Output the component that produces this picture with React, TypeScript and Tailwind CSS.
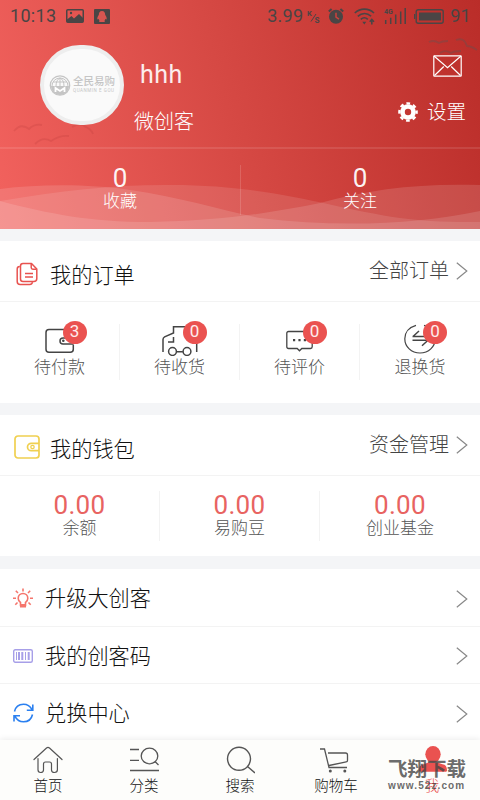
import React from "react";

type IconProps = { className?: string };

const ImageIcon = () => (
    <svg className="w-[18px] h-[14px]" viewBox="0 0 18 14">
        <rect x="0.75" y="0.75" width="16.5" height="12.5" rx="1" fill="none" stroke="#4a4545" strokeWidth="1.5" />
        <circle cx="5" cy="4" r="1.2" fill="#4a4545" />
        <path d="M1 12V10.500L5.500 7l2.500 2.500L13 5l4 4v4H1z" fill="#4a4545" />
    </svg>
);

const PenguinIcon = () => (
    <svg className="w-4 h-[15px]" viewBox="0 0 16 15">
        <rect width="16" height="15" rx="1" fill="#4a4545" />
        <path d="M8 2C5.600 2 4.800 3.800 4.800 6 3.700 7.500 3 9 3.400 10.300c.3.4.8-.1 1.100-.5.2.8.6 1.300 1.100 1.700-.7.300-.9 1.500.4 1.500h4c1.300 0 1.100-1.200.4-1.500.5-.4.900-.9 1.100-1.700.3.4.800.9 1.100.5C13 9 12.300 7.500 11.200 6 11.200 3.800 10.400 2 8 2z" fill="#d95550" />
    </svg>
);

const AlarmIcon = () => (
    <svg className="w-4 h-4" viewBox="0 0 16 16" fill="none">
        <circle cx="8" cy="8.700" r="7" fill="#4a4545" />
        <path d="M.8 3.400 3.600.9M15.200 3.400 12.400.9" stroke="#4a4545" strokeWidth="2" />
        <path d="M8 4.800v4.400l3 2" stroke="#cc413c" strokeWidth="1.500" />
    </svg>
);

const WifiIcon = () => (
    <svg className="w-[21px] h-[17px]" viewBox="0 0 21 17" fill="none" stroke="#4a4545" strokeWidth="1.600">
        <path d="M.8 5c5.500-5.200 13.800-5.200 19.200 0M3.800 8.300c4-3.800 9.500-3.800 13.300 0M6.800 11.400c2.300-2.200 4.700-2.200 7 0" />
        <path d="M10.300 16.500 8.300 13.800h4z" fill="#4a4545" stroke="none" />
        <path d="M17.800 16.500v-5M15.700 13.700l2.100-2.200 2.200 2.200" />
    </svg>
);

const SignalIcon = () => (
    <svg className="w-[23px] h-4" viewBox="0 0 23 16">
        <text x="0" y="5.500" fontSize="7" fontWeight="700" letterSpacing="0" fontFamily="Roboto, sans-serif" fill="#4a4545">4G</text>
        <path d="M1.700 12v4M6.700 9.800V16M11.700 6.500V16M16.700 3.500V16M21.200 0v16" stroke="#4a4545" strokeWidth="1.500" />
    </svg>
);

const BatteryIcon = () => (
    <svg className="w-[30px] h-[15px]" viewBox="0 0 30 15">
        <rect x="2.200" y="0.700" width="27" height="13.600" rx="2" fill="none" stroke="#4a4545" strokeWidth="1.400" />
        <rect x="5" y="3.500" width="22" height="8" fill="#4a4545" />
        <path d="M.5 5v5" stroke="#4a4545" strokeWidth="1.500" />
    </svg>
);

const MailIcon = () => (
    <svg className="w-[29px] h-[22px]" viewBox="0 0 29 22" fill="none" stroke="#fff" strokeWidth="1.200">
        <rect x="0.800" y="0.800" width="27.400" height="20.400" rx="0.500" />
        <path d="M1 1l13.500 11.700L28 1M1.500 20.500l9.300-9M27.500 20.500l-9.300-9" />
    </svg>
);

const GearIcon = () => (
    <svg className="w-5 h-5" viewBox="0 0 20 20" fill="none" stroke="#fff">
        <circle cx="10" cy="10" r="5.500" strokeWidth="4.600" />
        <circle cx="10" cy="10" r="8.600" strokeWidth="2.400" strokeDasharray="3.700 3.054" strokeDashoffset="1.850" />
    </svg>
);

const OrderIcon = () => (
    <svg className="w-[22px] h-6" viewBox="0 0 22 24" fill="none" stroke="#e8524f" strokeWidth="1.500" strokeLinejoin="round">
        <path d="M7 1.500h8.500L20.800 7v9.500c0 2-1 3-3 3H7c-1.700 0-2.500-1-2.500-2.500V4c0-1.600.9-2.500 2.500-2.500z" />
        <path d="M15.200 2v3.500c0 1 .6 1.700 1.700 1.700h3.500M3.800 4.500C2 4.500 1.200 5.500 1.200 7v12.500c0 2 1 3 3 3h9.500c1.700 0 2.500-.8 2.800-2.300M9 11.500h8M9 15h8" />
    </svg>
);

const WalletIcon = () => (
    <svg className="w-[26px] h-6 -mt-[3px]" viewBox="0 0 26 24" fill="none" stroke="#f0d050" strokeWidth="1.700">
        <rect x="1" y="1" width="24" height="22" rx="3" />
        <path d="M25 8.300h-7.800c-2 0-3.700 1.500-3.700 3.600s1.700 3.700 3.700 3.700H25" />
        <circle cx="18.500" cy="12" r="1.700" strokeWidth="1.300" />
    </svg>
);

const PayIcon = () => (
    <svg className="w-[30px] h-[30px]" viewBox="0 0 30 30" fill="none" stroke="#444" strokeWidth="1.500">
        <path d="M28.300 13V8.500c0-2-1-3-3-3H4c-2 0-3 1-3 3v16.700c0 2 1 3 3 3h21.300c2 0 3-1 3-3V20.500" />
        <path d="M28.300 14H18c-1.800 0-3 1.200-3 2.900 0 1.800 1.200 3 3 3h10.300" />
        <circle cx="18.300" cy="16.800" r="1.300" fill="#444" stroke="none" />
    </svg>
);

const TruckIcon = () => (
    <svg className="w-9 h-8 shrink-0" viewBox="0 0 36 32" fill="none" stroke="#444" strokeWidth="1.500">
        <path d="M1 28V15.500c0-1.300.4-2 1.600-2.700l8.900-3.800V2.800h21.500c1 0 1.700.8 1.700 1.800V28M11.500 13v5H6M14.600 27.700h6.300" />
        <circle cx="10.500" cy="27.500" r="3.900" />
        <circle cx="25" cy="27.500" r="3.900" />
    </svg>
);

const CommentIcon = () => (
    <svg className="w-[27px] h-[30px]" viewBox="0 0 27 30" fill="none" stroke="#444" strokeWidth="1.300">
        <path d="M2.500 7.500h22c1 0 1.700.7 1.700 1.700v13.600c0 1-.7 1.700-1.700 1.700h-8.700l-2.300 2.300-2.300-2.300H2.500c-1 0-1.700-.7-1.700-1.700V9.200c0-1 .7-1.700 1.700-1.700z" />
        <path d="M7 16.200h2.200M12.400 16.200h2.200M17.800 16.200H20" strokeWidth="2.200" />
    </svg>
);

const RefundIcon = () => (
    <svg className="w-8 h-[30px]" viewBox="0 0 32 30" fill="none" stroke="#444" strokeWidth="1.200">
        <path d="M12 1.400C5 3.300.8 8.500.8 14.700c0 8 6.600 14.300 15.200 14.300s15.200-6.300 15.200-14.300C31.200 8.500 27 3.300 20 1.400" />
        <path d="M8.500 12.500h16M9 12.500l6-5.500M8.500 16.300h16M24 16.300l-6 5.500" strokeWidth="1.500" />
    </svg>
);

const BulbIcon = () => (
    <svg className="w-5 h-5" viewBox="0 0 20 20" fill="none" stroke="#f5756c" strokeWidth="1.600">
        <path d="M7.500 17.500v-3C5.800 13.500 5.200 12.200 5.200 10.300a4.800 4.800 0 0 1 9.600 0c0 1.900-.6 3.200-2.300 4.200v3zM10 3.500V.5M0 10.300h3M17 10.300h3M5 5 2.800 2.800M15 5l2.200-2.200M4.500 14.500l-2.200 2.200M15.500 14.500l2.200 2.200" />
        <path d="M7 16h6v3.500H7z" fill="#f5756c" stroke="none" />
    </svg>
);

const BarcodeIcon = () => (
    <svg className="w-5 h-[14px]" viewBox="0 0 20 14" fill="none" stroke="#a79fe8">
        <rect x="0.700" y="0.700" width="18.600" height="12.600" rx="1.500" strokeWidth="1.400" />
        <path d="M3.500 3v8M12.500 3v8" strokeWidth="1" />
        <path d="M6 3v8M9.300 3v8M15.700 3v8" strokeWidth="2" />
    </svg>
);

const SyncIcon = () => (
    <svg className="w-[21px] h-5" viewBox="0 0 21 20" fill="none" stroke="#2b80f0" strokeWidth="1.600">
        <path d="M1.500 8.500C2.500 4 6 1.200 10.500 1.200c3.600 0 6.700 2 8.500 5.500M19.800 1.500v5.800h-6M19.500 11.500c-1 4.500-4.500 7.300-9 7.300-3.600 0-6.700-2-8.500-5.500M1 18.500v-5.800h6" />
    </svg>
);

const HomeIcon = () => (
    <svg className="w-[30px] h-7" viewBox="0 0 30 28" fill="none" stroke="#555" strokeWidth="1.200" strokeLinecap="round">
        <path d="M1 13.500 13.500 2c1-.9 2-.9 3 0L29 13.500M5 12.500v11.300c0 1.800.8 2.700 2.500 2.700s3-.7 3-2.500v-6c0-1.300.7-2 2-2h4c1.300 0 2 .7 2 2v6c0 1.800 1 2.500 3 2.500s2.900-.9 2.900-2.700V12.500" />
    </svg>
);

const CategoryIcon = () => (
    <svg className="w-[30px] h-7" viewBox="0 0 30 28" fill="none" stroke="#555" strokeWidth="1.300">
        <path d="M1 3.500h9M1 14.300h9M1 24.500h29M26 15.500l3.500 3.500" />
        <ellipse cx="20.500" cy="10" rx="8.300" ry="7.900" />
    </svg>
);

const SearchIcon = () => (
    <svg className="w-[30px] h-7" viewBox="0 0 30 28" fill="none" stroke="#555" strokeWidth="1.400">
        <circle cx="14" cy="12.800" r="11.500" />
        <path d="m22.500 20.500 7.500 6.500" />
    </svg>
);

const CartIcon = () => (
    <svg className="w-[30px] h-7 -ml-1" viewBox="0 0 30 28" fill="none" stroke="#555" strokeWidth="1.300">
        <path d="M1 3h4.500l4.500 18.500h18M9 7h17.500c1.500 0 2 .6 2 2v5.500c0 .8-.4 1.300-1.300 1.400L10 19.500" />
        <circle cx="11.300" cy="25" r="1.500" fill="#555" stroke="none" />
        <circle cx="25.800" cy="25" r="1.500" fill="#555" stroke="none" />
    </svg>
);

const UserIcon = () => (
    <svg className="w-[30px] h-7" viewBox="0 0 30 28" fill="#ea5250">
        <ellipse cx="16" cy="8.300" rx="7.700" ry="8.300" />
        <path d="M2 24.500c0-4 1.500-6 4.500-6.300l5-1.700h9l5 1.700c3 .3 4.500 2.300 4.500 6.300 0 .8-.5 1.200-1.200 1.200H3.200c-.7 0-1.200-.4-1.200-1.200z" />
    </svg>
);

const Arrow = ({ className }: IconProps) => (
    <svg className={`w-3 h-[18px] ${className ?? ""}`} viewBox="0 0 12 18" fill="none" stroke="#888" strokeWidth="1.200">
        <path d="m.8.700 10 8.300-10 8.300" />
    </svg>
);

const orders = [
    { label: "待付款", count: 3, icon: <PayIcon /> },
    { label: "待收货", count: 0, icon: <TruckIcon /> },
    { label: "待评价", count: 0, icon: <CommentIcon /> },
    { label: "退换货", count: 0, icon: <RefundIcon /> },
];

const wallet = [
    { label: "余额", value: "0.00" },
    { label: "易购豆", value: "0.00" },
    { label: "创业基金", value: "0.00" },
];

const menu = [
    { label: "升级大创客", icon: <BulbIcon /> },
    { label: "我的创客码", icon: <BarcodeIcon /> },
    { label: "兑换中心", icon: <SyncIcon /> },
];

const tabs = [
    { label: "首页", icon: <HomeIcon /> },
    { label: "分类", icon: <CategoryIcon /> },
    { label: "搜索", icon: <SearchIcon /> },
    { label: "购物车", icon: <CartIcon /> },
    { label: "我", icon: <UserIcon />, active: true },
];

const StatusBar = () => (
    <div className="h-8 flex items-center pl-[10px] pr-[9px] text-[18px] leading-none font-normal tracking-[0.3px] text-[#4a4545]">
        <span className="w-[56px]">10:13</span>
        <ImageIcon />
        <span className="w-[10px]" />
        <PenguinIcon />
        <span className="ml-auto w-[40px]">3.99</span>
        <svg className="w-[14px] h-[15px] mr-[7px]" viewBox="0 0 14 15" fill="#4a4545">
            <text x="0" y="6.500" fontSize="7.500" fontWeight="700" letterSpacing="0">K</text>
            <text x="7.500" y="14" fontSize="10" fontWeight="500" letterSpacing="0">s</text>
            <path d="M4 12.500 9 5" stroke="#4a4545" />
        </svg>
        <AlarmIcon />
        <span className="w-[10px]" />
        <WifiIcon />
        <span className="w-[9px]" />
        <SignalIcon />
        <span className="w-[7px]" />
        <BatteryIcon />
        <span className="ml-[6px]">91</span>
    </div>
);

const Backdrop = () => (
    <svg className="absolute inset-0 w-[480px] h-[229px]" viewBox="0 0 480 229" fill="#fff">
        <path d="M0 189C40 184 90 184 130 190 180 197 220 210 260 218 340 228 420 224 480 211V229H0z" fillOpacity="0.130" />
        <path d="M0 201C60 191 110 185 165 185 270 184 330 208 400 218 430 222 450 222 480 222V229H0z" fillOpacity="0.110" />
        <path d="M0 201C50 214 90 222 150 222 220 221 270 213 320 203 370 189 420 183 480 185V229H0z" fillOpacity="0.130" />
        <g fill="none" stroke="#a33" strokeWidth="1.800" strokeOpacity="0.180">
            <path d="M14 131c5-6 10-6 15-2 4-4 8-5 13-4M35 144c6-6 11-6 16-3 6-4 11-6 18-5M72 127c6-4 11-3 14 0 4 2 6 4 7 7" />
            <path d="M429 42c4-2 7-1 10 1 3-2 5-2 9-2M456 40c6-2 9 0 11 6 4 0 7 2 10 4M440 53c4-3 8-2 11 0 3-2 6-2 10-2" stroke="#555" strokeOpacity="0.350" />
        </g>
    </svg>
);

const SectionHead = ({
    icon,
    title,
    more,
}: {
    icon: React.ReactNode;
    title: string;
    more: string;
}) => (
    <div className="h-[61px] flex items-center pr-3 border-b border-[#f3f3f3]">
        <span className="w-[50px] pt-[6px] flex justify-center pl-1">{icon}</span>
        <span className="text-[21.200px] pt-[9px] text-[#111]">{title}</span>
        <span className="ml-auto -mt-[1px] text-[20px] text-[#444]">{more}</span>
        <Arrow className="ml-[7px]" />
    </div>
);

const App = () => {
    return (
        <div className="relative w-[480px] h-[800px] overflow-hidden flex flex-col bg-[#f4f5f7] leading-none font-light font-['Roboto','Noto_Sans_CJK_SC',sans-serif]">
            <header className="relative h-[229px] bg-[linear-gradient(75deg,#f2625e_0%,#d64944_48%,#ba2d29_100%)] text-white">
                <Backdrop />
                <div className="relative">
                    <StatusBar />
                    <div className="h-[115px] flex pl-10 pr-[14px]">
                        <div className="w-[84px] h-20 mt-[13px] rounded-full bg-[#fafafa] border-4 border-[#eee] flex items-center justify-center gap-[2px] text-[#c5c5c5]">
                            <svg className="w-[22px] h-[21px] shrink-0" viewBox="0 0 22 21" fill="none" stroke="#c5c5c5">
                                <circle cx="11" cy="10.500" r="9.700" strokeWidth="1.300" />
                                <path d="M3 11a8 8 0 0 1 16 0M11 3v8M7 11c0-4 1.500-7 4-8M15 11c0-4-1.500-7-4-8M4 7h14" />
                                <path d="M2 11h18c0 5-4 9-9 9s-9-4-9-9z" fill="#c5c5c5" stroke="none" />
                                <path d="M6.500 17v-4l4.500 3 4.500-3v4" stroke="#fff" strokeWidth="1.800" />
                            </svg>
                            <div className="w-[42px] whitespace-nowrap">
                                <div className="text-[10.500px] font-medium">全民易购</div>
                                <div className="mt-px text-[4.500px] tracking-[0.550px] font-normal">QUANMIN E GOU</div>
                            </div>
                        </div>
                        <div className="ml-[10px] pt-[30px]">
                            <div className="pl-[6px] text-[25px] font-normal tracking-[0.500px] text-white/90">hhh</div>
                            <div className="mt-[25px] text-[20px]">微创客</div>
                        </div>
                        <div className="ml-auto pt-[23px] flex flex-col items-end">
                            <span className="pr-[4px]"><MailIcon /></span>
                            <span className="mt-[24px] flex items-center gap-[9px] text-[19.500px]">
                                <GearIcon />
                                <span className="pt-[2px]">设置</span>
                            </span>
                        </div>
                    </div>
                    <div className="h-20 grid grid-cols-2 border-t-2 border-white/10 text-center">
                        <div className="pt-[16px]">
                            <div className="text-[26px] font-normal text-white/95">0</div>
                            <div className="mt-[2px] text-[17px]">收藏</div>
                        </div>
                        <div className="relative pt-[16px]">
                            <span className="absolute left-0 top-4 h-[50px] w-px bg-white/15" />
                            <div className="text-[26px] font-normal text-white/95">0</div>
                            <div className="mt-[2px] text-[17px]">关注</div>
                        </div>
                    </div>
                </div>
            </header>

            <section className="mt-3 h-[162px] bg-white">
                <SectionHead icon={<OrderIcon />} title="我的订单" more="全部订单" />
                <div className="grid grid-cols-4 pt-[22px]">
                    {orders.map((item, i) => (
                        <div
                            key={item.label}
                            className={`h-14 flex flex-col items-center ${i < 3 ? "border-r border-[#f3f3f3]" : ""}`}
                        >
                            <div className="relative h-[30px] w-[60px] flex justify-center">
                                {item.icon}
                                <span className="absolute left-[33px] -top-[3px] w-6 h-[23px] rounded-[50%] bg-[#ea5250] text-white/90 text-[17px] font-normal leading-5 text-center">
                                    {item.count}
                                </span>
                            </div>
                            <div className="mt-[5px] text-[17px] text-[#555]">{item.label}</div>
                        </div>
                    ))}
                </div>
            </section>

            <section className="mt-3 h-[141px] bg-white">
                <SectionHead icon={<WalletIcon />} title="我的钱包" more="资金管理" />
                <div className="grid grid-cols-3 pt-[15px]">
                    {wallet.map((item, i) => (
                        <div
                            key={item.label}
                            className={`h-[50px] text-center ${i < 2 ? "border-r border-[#f3f3f3]" : ""}`}
                        >
                            <div className="pt-[1px] text-[26px] font-normal tracking-[0.300px] text-[#e86361]">{item.value}</div>
                            <div className="mt-[2px] text-[17px] text-[#555]">{item.label}</div>
                        </div>
                    ))}
                </div>
            </section>

            <section className="mt-[13px] bg-white">
                {menu.map((item) => (
                    <div key={item.label} className="h-[57.500px] flex items-center pl-[13px] pr-3 border-b border-[#f3f3f3]">
                        <span className="w-8 pt-[2px]">{item.icon}</span>
                        <span className="pt-[3px] text-[21.200px] text-[#111]">{item.label}</span>
                        <Arrow className="ml-auto mt-[3px]" />
                    </div>
                ))}
            </section>

            <nav className="absolute inset-x-0 bottom-0 h-[60px] grid grid-cols-5 bg-[#fdfdfb] shadow-[0_-1px_6px_rgba(0,0,0,0.08)]">
                {tabs.map((tab) => (
                    <div
                        key={tab.label}
                        className={`flex flex-col items-center pt-[6px] text-[14.500px] ${tab.active ? "text-[#ea5250]" : "text-[#111]"}`}
                    >
                        {tab.icon}
                        <span className="mt-[6px]">{tab.label}</span>
                    </div>
                ))}
            </nav>

            <div className="absolute left-[388px] top-[760px] w-[80px] font-bold text-[#444]/80 whitespace-nowrap">
                <div className="text-[19.500px]">飞翔下载</div>
                <div className="mt-[1px] text-[10px] tracking-[1.100px] font-['Liberation_Sans',sans-serif]">www.52z.com</div>
            </div>
        </div>
    );
};

export default App;
